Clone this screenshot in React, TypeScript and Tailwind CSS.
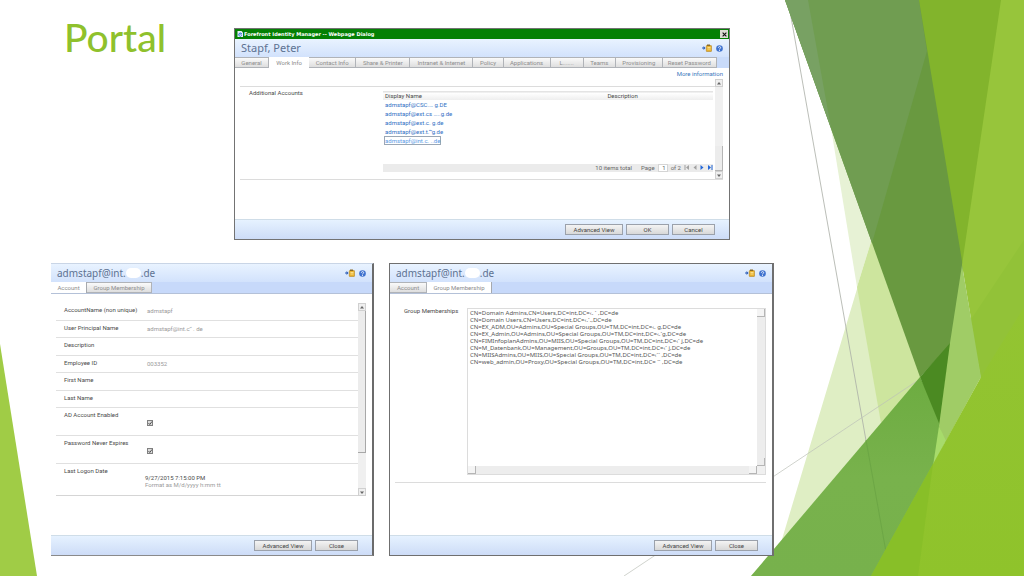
import type { ReactNode } from "react";

function Background() {
  return (
    <svg
      className="absolute inset-0 h-full w-full"
      viewBox="0 0 1024 576"
      preserveAspectRatio="none"
      aria-hidden="true"
    >
      <defs>
        <linearGradient id="bright" x1="0" y1="0" x2="0" y2="1">
          <stop offset="0" stopColor="#93c432" />
          <stop offset="1" stopColor="#8fc32b" />
        </linearGradient>
        <linearGradient id="mid" x1="0" y1="0" x2="0" y2="1">
          <stop offset="0" stopColor="#6dac41" />
          <stop offset="0.5" stopColor="#78b24c" />
          <stop offset="1" stopColor="#77b14c" />
        </linearGradient>
      </defs>
      <polygon points="0,344 37,576 0,576" fill="#a0cc46" />
      <polygon points="872,239 920,377 890,420 751,576 771,576" fill="#dfeec4" />
      <polygon points="831,128 872,239 857,287" fill="#e7f2d5" />
      <polygon points="872,239 922,377 881,423 857,287" fill="#cde59e" />
      <line x1="788" y1="0" x2="890" y2="576" stroke="#a9ada6" strokeWidth="0.8" />
      <line x1="624" y1="576" x2="920" y2="379" stroke="#bcc0b8" strokeWidth="0.7" />
      <polygon points="751,576 920,377 945,426 935,464 873,578" fill="url(#mid)" />
      <line x1="866" y1="440" x2="886" y2="552" stroke="#69a344" strokeWidth="0.8" />
      <polygon points="785,0 921,0 964,265 952,343 920,377" fill="#699940" />
      <polygon points="785,0 919,0 927,51 872,243" fill="#709d51" />
      <polygon points="785,0 808,0 831,128" fill="#78a163" />
      <polygon points="920,377 951,342 941,428" fill="#4b8a22" />
      <polygon points="919,0 1002,0 963,267" fill="#82b42c" />
      <polygon points="1001,0 1024,0 1024,309 981,379 962,265" fill="#97c53b" />
      <polygon points="1024,240 1024,309 981,379 970,321" fill="#92c238" />
      <polygon points="962,265 981,377 945,443 939,426 950,343" fill="#a0cc66" />
      <polygon points="939,426 946,441 933,466" fill="#a7db6b" />
      <polygon points="871,576 933,464 981,377 1024,307 1024,576" fill="url(#bright)" />
      <polygon points="871,576 933,464 918,576" fill="#88bf28" />
    </svg>
  );
}

function HeaderIcons() {
  return (
    <div className="flex items-center gap-1">
      <button type="button" aria-label="Add to clipboard" className="block">
        <svg viewBox="0 0 20 16" className="h-2 w-[10px]">
          <path d="M0 8h6" stroke="#2f5fb8" strokeWidth="2" />
          <path d="M3 4l4 4-4 4z" fill="#2f5fb8" />
          <rect x="8.500" y="3" width="10.500" height="12" rx="1" fill="#e9b22e" stroke="#a87912" />
          <path d="M10 1h6v3h-6z" fill="#8b6b26" />
          <path d="M11 7h6M11 10h6" stroke="#fff1b8" strokeWidth="1.4" />
        </svg>
      </button>
      <button type="button" aria-label="Help" className="block">
        <svg viewBox="0 0 16 16" className="size-[7px]">
          <circle cx="8" cy="8" r="7.6" fill="#3f72cf" />
          <path d="M5.4 6.2c0-3.6 5.4-3.4 5.2-.2C10.500 8 8 8 8 10.200" stroke="#fff" strokeWidth="2" fill="none" />
          <circle cx="8" cy="12.600" r="1.200" fill="#fff" />
        </svg>
      </button>
    </div>
  );
}

function DialogHeader({ title }: { title: ReactNode }) {
  return (
    <div className="flex h-[18px] items-center justify-between bg-linear-to-b from-[#e9f3ff] to-[#d2e2fc] pr-[6px] pl-[6px]">
      <h2 className="font-[family-name:Noto_Sans] text-[11px] leading-4 text-[#5d7292]">{title}</h2>
      <HeaderIcons />
    </div>
  );
}

function MaskedAddress() {
  return (
    <span className="flex items-center text-[10px]">
      admstapf@int.
      <span className="h-[10px] w-[15px] rounded-full bg-white" />
      .de
    </span>
  );
}

function Tab({ label, active = false }: { label: ReactNode; active?: boolean }) {
  return (
    <button
      type="button"
      role="tab"
      aria-selected={active}
      className={
        active
          ? "h-[11px] bg-white text-center leading-[11px] whitespace-nowrap text-[#8b8b8b]"
          : "h-[11px] border-t border-r border-b border-[#b0b3b8] bg-linear-to-b from-[#fafafa] to-[#dedede] text-center leading-[9px] whitespace-nowrap text-[#8e8e8e]"
      }
    >
      {label}
    </button>
  );
}

function DialogButton({ children, wide = false }: { children: ReactNode; wide?: boolean }) {
  return (
    <button
      type="button"
      className={
        (wide ? "w-[58px]" : "w-[43px]") +
        " h-[11px] border border-[#9ba1ab] bg-linear-to-b from-[#f4f4f4] to-[#d8d8d8] text-center leading-[9px] text-[#444]"
      }
    >
      {children}
    </button>
  );
}

function DialogFooter({ children }: { children: ReactNode }) {
  return (
    <div className="flex h-[20px] items-center justify-end gap-[3px] border-t border-[#cfdde8] bg-linear-to-b from-[#e6f2ff] to-[#cddcf7] pr-[14px]">
      {children}
    </div>
  );
}

function Arrow({ down = false }: { down?: boolean }) {
  return (
    <span className="grid h-2 w-2 shrink-0 place-items-center border border-[#d0d0d0] bg-[#efefef]">
      <svg viewBox="0 0 8 6" className="h-[3px] w-1">
        <path d={down ? "M0 1h8L4 6z" : "M0 5h8L4 0z"} fill="#666" />
      </svg>
    </span>
  );
}

const accounts = ["admstapf@CSC.… g.DE", "admstapf@ext.cs …..g.de", "admstapf@ext.c. g.de", "admstapf@ext.t.“’g.de"];

function AccountsDialog() {
  return (
    <section className="mt-3 mr-[44px] border border-[#737373] bg-white">
      <div className="flex h-[10px] items-center bg-[#048004] pr-px pl-[2px] text-white">
        <svg viewBox="0 0 12 12" className="mr-px size-[6px]">
          <path d="M1 0h8l3 3v9H1z" fill="#e8f0fa" />
          <path d="M9.500 8.500A3.200 3.200 0 1 1 9.500 6H4" stroke="#2b6fd0" strokeWidth="1.800" fill="none" />
        </svg>
        <span className="grow font-[family-name:DejaVu_Sans] text-[5px] leading-[10px] font-bold">
          Forefront Identity Manager -- Webpage Dialog
        </span>
        <button type="button" aria-label="Close dialog" className="grid h-2 w-2 place-items-center bg-[#dcdcd4]">
          <svg viewBox="0 0 8 8" className="size-[5px]">
            <path d="M1 1l6 6M7 1L1 7" stroke="#111" strokeWidth="1.800" />
          </svg>
        </button>
      </div>
      <DialogHeader title="Stapf, Peter" />
      <div
        role="tablist"
        className="grid grid-cols-[34fr_40fr_47fr_54fr_63fr_30fr_47fr_33fr_32fr_47fr_54fr_12fr] bg-[#c9dbfa]"
      >
        <Tab label="General" />
        <Tab label="Work Info" active />
        <Tab label="Contact Info" />
        <Tab label="Share & Printer" />
        <Tab label="Intranet & Internet" />
        <Tab label="Policy" />
        <Tab label="Applications" />
        <Tab label="L......." />
        <Tab label="Teams" />
        <Tab label="Provisioning" />
        <Tab label="Reset Password" />
      </div>
      <div className="flex h-[11px] items-center justify-end pr-[6px]">
        <a href="#more" className="text-[#3c78bd]">
          More information
        </a>
      </div>
      <div className="mr-[6px] ml-[5px] flex h-[101px] border-b border-[#dcdcdc]">
        <div className="flex grow flex-col pt-[7px]">
          <div className="flex border-t border-[#dcdcdc]">
            <div className="w-[143px] shrink-0 pt-[2px] pl-[9px]">Additional Accounts</div>
            <div className="mr-[2px] flex grow flex-col pt-1">
              <table className="w-full border-collapse text-left">
                <thead>
                  <tr className="h-2 border-t border-[#e4e4e4] bg-linear-to-b from-white to-[#eeeeee]">
                    <th className="w-[68%] p-0 pl-[2px] font-normal">Display Name</th>
                    <th className="p-0 font-normal">Description</th>
                  </tr>
                </thead>
                <tbody>
                  {accounts.map((a) => (
                    <tr key={a} className="h-[9px]">
                      <td className="p-0 pl-[2px]">
                        <a href="#account" className="block leading-[9px] text-[#2f6fc4]">
                          {a}
                        </a>
                      </td>
                      <td className="p-0" />
                    </tr>
                  ))}
                  <tr className="h-[9px]">
                    <td className="p-0 pl-px">
                      <a href="#account" className="block w-fit border border-[#9aa7b5] text-[#5b9be6]">
                        admstapf@int.c. ..de
                      </a>
                    </td>
                    <td className="p-0" />
                  </tr>
                </tbody>
              </table>
              <div className="mt-[19px] flex h-2 items-center justify-end gap-[3px] bg-[#ebebeb] text-[#666]">
                <span className="mr-[6px]">10 items total</span>
                <label htmlFor="page">Page</label>
                <input
                  id="page"
                  defaultValue="1"
                  className="h-2 w-[10px] border border-[#d5d5d5] bg-white pr-px text-right leading-[6px]"
                />
                <span>of 2</span>
                <button type="button" aria-label="First page">
                  <svg viewBox="0 0 12 10" className="h-[5px] w-[6px]">
                    <path d="M1 0h2v10H1zM10 0v10L4 5z" fill="#a2a2a2" />
                  </svg>
                </button>
                <button type="button" aria-label="Previous page">
                  <svg viewBox="0 0 8 10" className="h-[5px] w-1">
                    <path d="M7 0v10L1 5z" fill="#a2a2a2" />
                  </svg>
                </button>
                <button type="button" aria-label="Next page">
                  <svg viewBox="0 0 8 10" className="h-[5px] w-1">
                    <path d="M1 0v10l6-5z" fill="#2468d8" />
                  </svg>
                </button>
                <button type="button" aria-label="Last page">
                  <svg viewBox="0 0 12 10" className="h-[5px] w-[6px]">
                    <path d="M9 0h2v10H9zM2 0v10l6-5z" fill="#2468d8" />
                  </svg>
                </button>
              </div>
            </div>
          </div>
        </div>
        <div className="flex w-2 flex-col bg-[#f0f0f0]">
          <Arrow />
          <span className="grow" />
          <span className="h-[25px] border-r border-b border-[#b5b5b5] bg-[#ececec]" />
          <Arrow down />
        </div>
      </div>
      <div className="h-[39px]" />
      <DialogFooter>
        <DialogButton wide>Advanced View</DialogButton>
        <DialogButton>OK</DialogButton>
        <DialogButton>Cancel</DialogButton>
      </DialogFooter>
    </section>
  );
}

const fields = [
  { label: "AccountName (non unique)", value: "admstapf" },
  { label: "User Principal Name", value: "admstapf@int.c’‘ . de" },
  { label: "Description", value: "" },
  { label: "Employee ID", value: "003352" },
  { label: "First Name", value: "" },
  { label: "Last Name", value: "" },
];

function CheckRow({ id, label }: { id: string; label: string }) {
  return (
    <div className="flex h-[28px] border-b border-[#e0e0e0] pt-[3px] pl-2">
      <label htmlFor={id} className="w-[83px]">
        {label}
      </label>
      <span className="mt-[9px] grid size-[6px]">
        <input
          id={id}
          type="checkbox"
          defaultChecked
          className="col-start-1 row-start-1 size-[6px] appearance-none border border-[#808080] bg-[#dcdcdc]"
        />
        <svg viewBox="0 0 12 12" className="pointer-events-none col-start-1 row-start-1 size-[6px]">
          <path d="M3 6l2.500 3L10 3" stroke="#444" strokeWidth="1.800" fill="none" />
        </svg>
      </span>
    </div>
  );
}

function AccountDialog() {
  return (
    <section className="flex flex-col border-t border-r-2 border-b border-t-[#c9d5e6] border-r-[#6b6b6b] border-b-[#8a8a8a] bg-white">
      <DialogHeader title={<MaskedAddress />} />
      <div role="tablist" className="flex border-b border-[#b4c1d8] bg-[#c7d9fa]">
        <div className="grid w-[35px]">
          <Tab label="Account" active />
        </div>
        <div className="grid w-[66px] border-l border-[#a6a9ae]">
          <Tab label="Group Membership" />
        </div>
      </div>
      <div className="mt-[9px] mr-[6px] ml-[5px] flex">
        <div className="grow">
          <div className="grid h-[105px] auto-rows-fr">
            {fields.map((f) => (
              <div key={f.label} className="flex border-b border-[#e0e0e0] pt-[3px] pl-2">
                <span className="w-[83px]">{f.label}</span>
                <span className="pt-px text-[#9a9a9a]">{f.value}</span>
              </div>
            ))}
          </div>
          <CheckRow id="enabled" label="AD Account Enabled" />
          <CheckRow id="never-expires" label="Password Never Expires" />
          <div className="h-8 border-b border-[#d5d5d5] pt-[3px] pl-2">
            <div>Last Logon Date</div>
            <div className="pl-[81px]">9/27/2015 7:15:00 PM</div>
            <div className="pl-[81px] text-[#9a9a9a]">Format as M/d/yyyy h:mm tt</div>
          </div>
        </div>
        <div className="flex w-2 flex-col bg-[#f0f0f0]">
          <Arrow />
          <span className="h-[142px] border-r border-b border-[#a8a8a8] bg-[#ececec]" />
          <span className="grow" />
          <Arrow down />
        </div>
      </div>
      <div className="h-[39px]" />
      <DialogFooter>
        <DialogButton wide>Advanced View</DialogButton>
        <DialogButton>Close</DialogButton>
      </DialogFooter>
    </section>
  );
}

const memberships = [
  "CN=Domain Admins,CN=Users,DC=int,DC=‹. ` ,DC=de",
  "CN=Domain Users,CN=Users,DC=int,DC=‹.`.,DC=de",
  "CN=EX_ADM,OU=Admins,OU=Special Groups,OU=TM,DC=int,DC=‹. g,DC=de",
  "CN=EX_Admin,OU=Admins,OU=Special Groups,OU=TM,DC=int,DC=‹.`g,DC=de",
  "CN=FIMInfoplanAdmins,OU=MIIS,OU=Special Groups,OU=TM,DC=int,DC=‹` j,DC=de",
  "CN=M_Datenbank,OU=Management,OU=Groups,OU=TM,DC=int,DC=‹` j,DC=de",
  "CN=MIISAdmins,OU=MIIS,OU=Special Groups,OU=TM,DC=int,DC=‹`` ,DC=de",
  "CN=web_admin,OU=Proxy,OU=Special Groups,OU=TM,DC=int,DC= `` ,DC=de",
].join("\n");

function GroupDialog() {
  return (
    <section className="flex flex-col border border-r-2 border-[#6f6f6f] bg-white">
      <DialogHeader title={<MaskedAddress />} />
      <div role="tablist" className="flex border-b border-[#b4c1d8] bg-[#c7d9fa]">
        <div className="grid w-[37px]">
          <Tab label="Account" />
        </div>
        <div className="grid w-[65px] border-r border-[#a6a9ae]">
          <Tab label="Group Membership" active />
        </div>
      </div>
      <div className="mt-3 mr-[6px] ml-[5px] flex border-b border-[#dcdcdc] pb-[7px]">
        <label htmlFor="memberships" className="w-[72px] shrink-0 pt-px pl-[9px]">
          Group Memberships
        </label>
        <div className="mt-[2px] grid grow grid-cols-[1fr_8px] grid-rows-[1fr_8px] border border-[#dcdcdc]">
          <textarea
            id="memberships"
            readOnly
            wrap="off"
            value={memberships}
            className="block h-[157px] w-full resize-none overflow-hidden bg-white pt-px pl-[2px] font-[family-name:Noto_Sans] text-[6px] leading-[7px] text-[#555]"
          />
          <div className="flex flex-col justify-between bg-[#ededed]">
            <span className="h-2 border-r border-b border-[#b5b5b5] bg-[#f4f4f4]" />
            <span className="h-2 border-r border-b border-[#b5b5b5]" />
          </div>
          <div className="flex justify-between bg-[#ededed]">
            <span className="w-2 border-r border-b border-[#b5b5b5] bg-[#f4f4f4]" />
            <span className="w-2 border-r border-b border-[#b5b5b5] bg-[#f4f4f4]" />
          </div>
          <div className="bg-[#f0f0f0]" />
        </div>
      </div>
      <div className="grow" />
      <DialogFooter>
        <DialogButton wide>Advanced View</DialogButton>
        <DialogButton>Close</DialogButton>
      </DialogFooter>
    </section>
  );
}

export default function App() {
  return (
    <main className="relative min-h-screen overflow-hidden bg-white">
      <Background />
      <div className="relative flex flex-col gap-[23px] pt-4 pr-[250px] pb-5 pl-[51px] font-[family-name:Roboto,sans-serif] text-[6px] leading-[7px] text-[#4a4a4a]">
        <div className="grid grid-cols-[183px_1fr]">
          <h1 className="pl-[13px] font-[family-name:Lato,sans-serif] text-[39px] leading-[42px] font-medium text-[#8fc12c]">
            Portal
          </h1>
          <AccountsDialog />
        </div>
        <div className="grid grid-cols-[323fr_385fr] gap-[15px]">
          <AccountDialog />
          <GroupDialog />
        </div>
      </div>
    </main>
  );
}
